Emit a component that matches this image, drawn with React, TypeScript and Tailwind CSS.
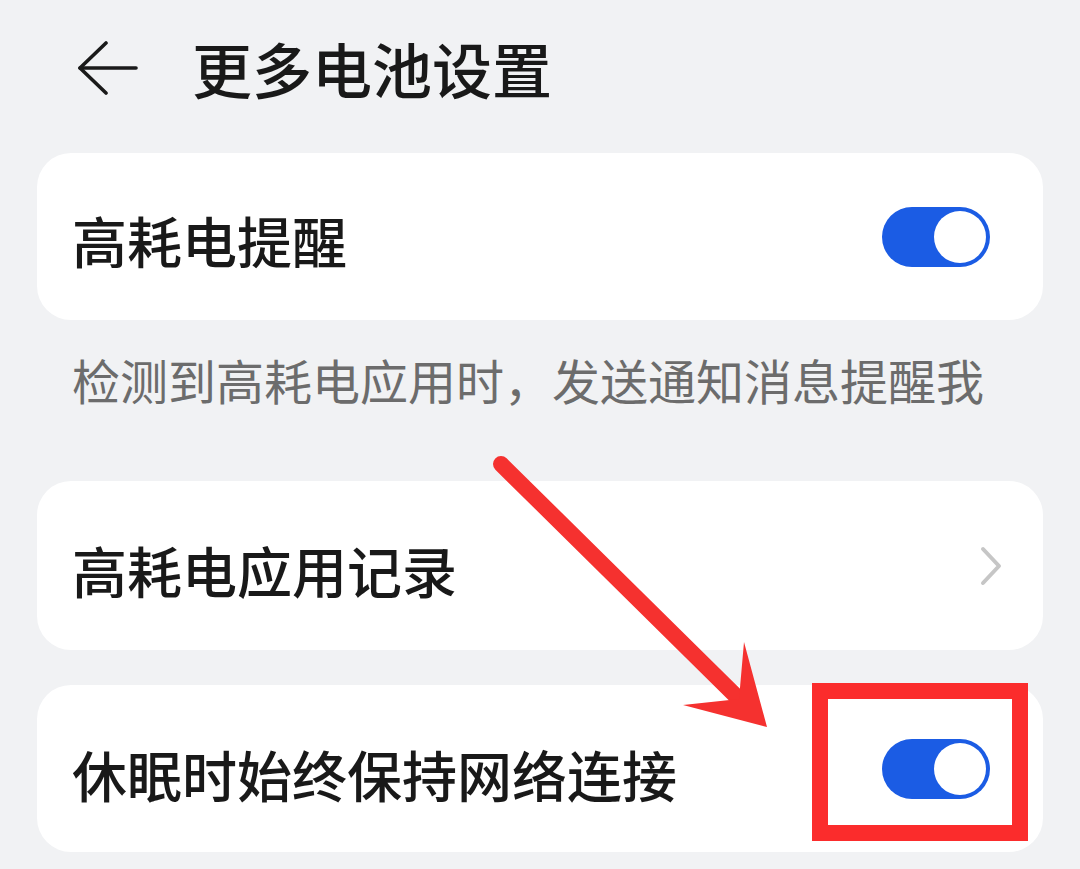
import React from "react";

function Toggle() {
  return (
    <div className="w-[108px] h-[60px] rounded-full bg-[#1b5ce4] flex items-center justify-end pr-[4px] shrink-0">
      <div className="w-[52px] h-[52px] rounded-full bg-white" />
    </div>
  );
}

export default function App() {
  return (
    <div className="relative w-[1080px] h-[869px] overflow-hidden bg-[#f1f2f4] [font-family:'Noto_Sans_CJK_SC','Noto_Sans',sans-serif] text-[#191919]">
      <header className="h-[136px] flex items-center pl-[78px]">
        <svg width="60" height="54" viewBox="0 0 60 54" fill="none" stroke="#1a1a1a" strokeWidth="3.6" strokeLinecap="round" strokeLinejoin="round">
          <path d="M2 27 H58" />
          <path d="M28 2 L2 27 L28 52" />
        </svg>
        <h1 className="ml-[54px] text-[60px] leading-none font-medium">更多电池设置</h1>
      </header>

      <div className="mt-[17px] mx-[37px] h-[167px] bg-white rounded-[34px] flex items-center justify-between pl-[35px] pr-[53px]">
        <span className="text-[55px] leading-none font-medium pt-[6px]">高耗电提醒</span>
        <Toggle />
      </div>

      <div className="mx-[37px] h-[161px] pl-[35px] pt-[26px]">
        <p className="text-[48px] leading-[66px] text-[#6c6c6c]">检测到高耗电应用时，发送通知消息提醒我</p>
      </div>

      <div className="mx-[37px] h-[169px] bg-white rounded-[34px] flex items-center justify-between pl-[35px] pr-[40px]">
        <span className="text-[55px] leading-none font-medium pt-[8px]">高耗电应用记录</span>
        <svg width="24" height="40" viewBox="0 0 24 40" fill="none" stroke="#c6c6c6" strokeWidth="4" strokeLinecap="round" strokeLinejoin="round">
          <path d="M4 3 L20 20 L4 37" />
        </svg>
      </div>

      <div className="mt-[35px] mx-[37px] h-[167px] bg-white rounded-[34px] flex items-center justify-between pl-[35px] pr-[53px]">
        <span className="text-[55px] leading-none font-medium pt-[10px]">休眠时始终保持网络连接</span>
        <Toggle />
      </div>

      {/* red highlight box */}
      <div className="absolute left-[812px] top-[683px] w-[216px] h-[158px] border-[16px] border-[#fb2c2c]" />

      {/* red arrow */}
      <svg className="absolute left-0 top-0 pointer-events-none" width="1080" height="869" viewBox="0 0 1080 869">
        <line x1="501" y1="464" x2="742" y2="702" stroke="#f5312f" strokeWidth="16" strokeLinecap="round" />
        <polygon points="767,727 744,642 739,699 683,705" fill="#f5312f" />
      </svg>
    </div>
  );
}
